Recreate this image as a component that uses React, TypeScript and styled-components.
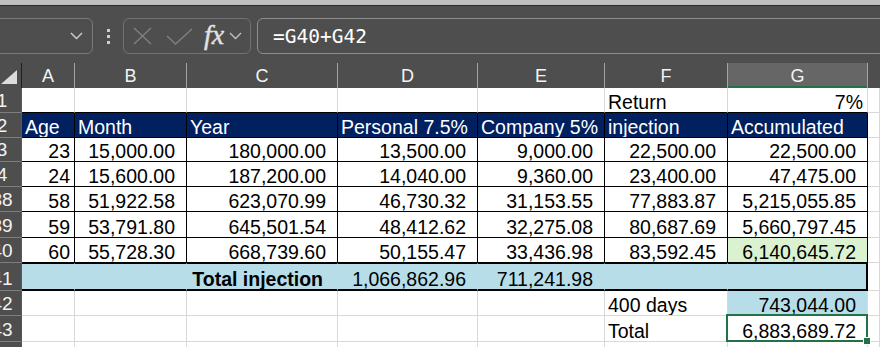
import styled, { createGlobalStyle } from "styled-components";

const GRID = "#d9d9d9";
const BLACK = "#000000";
const NAVY = "#002060";
const TEAL = "#b7dee8";
const MINT = "#daf2d0";
const EXCEL_GREEN = "#217346";
const COLS = "22px 53px 112px 151px 140px 127px 123px 140px 1fr";

type Variant = "blank" | "head" | "teal" | "mint";

type CellSpec = {
  text?: string;
  align?: "left" | "right";
  variant?: Variant;
  pad?: number;
  bold?: boolean;
  right?: string;
  rightW?: number;
  bottom?: string;
  bottomW?: number;
  top?: string;
  selected?: boolean;
};

type RowSpec = { n: string; h: number; cells: CellSpec[]; selected?: boolean };

const blank = (bottom = GRID): CellSpec => ({ bottom });

const dataRow = (n: string, h: number, vals: string[], lastMint = false): RowSpec => ({
  n,
  h,
  cells: [
    ...vals.map((v, i) => ({
      text: v,
      align: "right" as const,
      pad: i === 0 ? 4 : 11,
      right: BLACK,
      bottom: BLACK,
      variant: (lastMint && i === 6 ? "mint" : "blank") as Variant,
    })),
    blank(),
  ],
});

// row 41 is one filled band with a medium frame
const totalCell = (extra: CellSpec = {}): CellSpec => ({
  variant: "teal",
  right: TEAL,
  top: BLACK,
  bottom: BLACK,
  bottomW: 2,
  ...extra,
});

const ROWS: RowSpec[] = [
  {
    n: "1",
    h: 25,
    cells: [
      blank(BLACK),
      blank(BLACK),
      blank(BLACK),
      blank(BLACK),
      blank(BLACK),
      { text: "Return", bottom: BLACK },
      { text: "7%", align: "right", pad: 4, bottom: BLACK },
      blank(),
    ],
  },
  {
    n: "2",
    h: 25,
    cells: [
      ...["Age", "Month", "Year", "Personal 7.5%", "Company 5%", "injection", "Accumulated"].map(
        (t) => ({ text: t, variant: "head" as Variant, right: BLACK, bottom: BLACK })
      ),
      blank(),
    ],
  },
  dataRow("3", 24, ["23", "15,000.00", "180,000.00", "13,500.00", "9,000.00", "22,500.00", "22,500.00"]),
  dataRow("4", 25, ["24", "15,600.00", "187,200.00", "14,040.00", "9,360.00", "23,400.00", "47,475.00"]),
  dataRow("38", 25, ["58", "51,922.58", "623,070.99", "46,730.32", "31,153.55", "77,883.87", "5,215,055.85"]),
  dataRow("39", 26, ["59", "53,791.80", "645,501.54", "48,412.62", "32,275.08", "80,687.69", "5,660,797.45"]),
  dataRow("40", 25, ["60", "55,728.30", "668,739.60", "50,155.47", "33,436.98", "83,592.45", "6,140,645.72"], true),
  {
    n: "41",
    h: 28,
    cells: [
      totalCell(),
      totalCell(),
      totalCell({ text: "Total injection", bold: true, align: "right", pad: 14 }),
      totalCell({ text: "1,066,862.96", align: "right", pad: 11 }),
      totalCell({ text: "711,241.98", align: "right", pad: 11 }),
      totalCell(),
      totalCell({ right: BLACK, rightW: 2 }),
      blank(),
    ],
  },
  {
    n: "42",
    h: 25,
    cells: [
      blank(),
      blank(),
      blank(),
      blank(),
      blank(),
      { text: "400 days" },
      { text: "743,044.00", align: "right", pad: 11, variant: "teal" },
      blank(),
    ],
  },
  {
    n: "43",
    h: 26,
    selected: true,
    cells: [
      blank(),
      blank(),
      blank(),
      blank(),
      blank(),
      { text: "Total" },
      { text: "6,883,689.72", align: "right", pad: 11, selected: true },
      blank(),
    ],
  },
  { n: "44", h: 25, cells: [blank(), blank(), blank(), blank(), blank(), blank(), blank(), blank()] },
];

const GlobalStyle = createGlobalStyle`
  html, body {
    margin: 0;
    padding: 0;
    background: #4e4e4e;
  }
  * {
    box-sizing: border-box;
  }
`;

export default function App() {
  return (
    <>
      <GlobalStyle />
      <Window>
        <TopStrip />
        <FormulaBar>
          <NameBox>
            <svg width="13" height="8" viewBox="0 0 13 8">
              <polyline points="1,1 6.5,6.5 12,1" fill="none" stroke="#cfcfcf" strokeWidth="1.4" />
            </svg>
          </NameBox>
          <Grip>
            <span />
            <span />
            <span />
          </Grip>
          <FnBox>
            <svg width="19" height="18" viewBox="0 0 19 18">
              <line x1="1" y1="1" x2="18" y2="17" stroke="#808080" strokeWidth="1.4" />
              <line x1="18" y1="1" x2="1" y2="17" stroke="#808080" strokeWidth="1.4" />
            </svg>
            <svg width="27" height="17" viewBox="0 0 27 17" style={{ marginLeft: 14 }}>
              <polyline points="1,8 9.5,16 26,1" fill="none" stroke="#808080" strokeWidth="1.4" />
            </svg>
            <FxLabel>fx</FxLabel>
            <svg width="13" height="8" viewBox="0 0 13 8" style={{ marginLeft: 5 }}>
              <polyline points="1,1 6.5,6.5 12,1" fill="none" stroke="#c4c4c4" strokeWidth="1.3" />
            </svg>
          </FnBox>
          <FormulaInput>=G40+G42</FormulaInput>
        </FormulaBar>
        <Sheet>
          <ColHeaderRow>
            <Corner>
              <svg width="18" height="16" viewBox="0 0 18 16">
                <polygon points="1,15 17,15 17,1" fill="#dcdcdc" />
              </svg>
            </Corner>
            {["A", "B", "C", "D", "E", "F", "G"].map((c) => (
              <ColHead key={c} $active={c === "G"}>
                {c}
              </ColHead>
            ))}
            <ColHead />
          </ColHeaderRow>
          {ROWS.map((row) => (
            <SheetRow key={row.n} $h={row.h}>
              <RowHead $selected={row.selected}>
                <RowNum>{row.n}</RowNum>
              </RowHead>
              {row.cells.map((c, i) => (
                <Cell
                  key={i}
                  $variant={c.variant ?? "blank"}
                  $align={c.align ?? "left"}
                  $pad={c.pad ?? 3}
                  $bold={c.bold}
                  $right={c.right ?? GRID}
                  $rightW={c.rightW ?? 1}
                  $bottom={c.bottom ?? GRID}
                  $bottomW={c.bottomW ?? 1}
                  $top={c.top}
                  $selected={c.selected}
                >
                  {c.text}
                  {c.selected && (
                    <>
                      <SelectionFrame />
                      <FillHandle />
                    </>
                  )}
                </Cell>
              ))}
            </SheetRow>
          ))}
        </Sheet>
      </Window>
    </>
  );
}

const Window = styled.div`
  width: 880px;
  height: 347px;
  overflow: hidden;
  background: #4e4e4e;
  font-family: "Liberation Sans", Arial, sans-serif;
`;

const TopStrip = styled.div`
  height: 6px;
  background: #bfbfbf;
  border-bottom: 1px solid #2c2c2c;
`;

const FormulaBar = styled.div`
  height: 57px;
  padding: 12px 0 9px 0;
  display: flex;
  align-items: stretch;
`;

const BarBox = styled.div`
  height: 36px;
  border: 1px solid #7a7a7a;
  border-radius: 6px;
  display: flex;
  align-items: center;
`;

const NameBox = styled(BarBox)`
  width: 103px;
  margin-left: -10px;
  justify-content: flex-end;
  padding-right: 9px;
`;

const Grip = styled.div`
  width: 30px;
  display: flex;
  flex-direction: column;
  align-items: center;
  justify-content: center;
  gap: 3px;

  span {
    display: block;
    width: 3px;
    height: 3px;
    background: #cfcfcf;
  }
`;

const FnBox = styled(BarBox)`
  width: 128px;
  border-color: #727272;
  padding-left: 9px;
`;

const FxLabel = styled.span`
  margin-left: 11px;
  font-family: "Liberation Serif", "DejaVu Serif", serif;
  font-style: italic;
  font-size: 28px;
  line-height: 26px;
  color: #e2e2e2;
  margin-top: -3px;
  -webkit-text-stroke: 0.4px #e2e2e2;
`;

const FormulaInput = styled(BarBox)`
  flex: 1;
  margin-left: 6px;
  margin-right: -12px;
  border-color: #8e8e8e;
  padding-left: 15px;
  font-family: "DejaVu Sans Mono", "Liberation Mono", monospace;
  font-size: 19.5px;
  color: #ffffff;
`;

const Sheet = styled.div`
  background: #ffffff;
`;

const ColHeaderRow = styled.div`
  display: grid;
  grid-template-columns: ${COLS};
  height: 25px;
  background: #4e4e4e;
`;

const Corner = styled.div`
  display: flex;
  align-items: flex-end;
  justify-content: flex-end;
  padding: 0 3px 3px 0;
  border-right: 1px solid #1e1e1e;
`;

const ColHead = styled.div<{ $active?: boolean }>`
  display: flex;
  align-items: center;
  justify-content: center;
  padding-top: 2px;
  color: #f4f4f4;
  font-size: 18px;
  border-right: 1px solid #a3a3a3;
  background: ${({ $active }) => ($active ? "#666666" : "transparent")};
  box-shadow: ${({ $active }) => ($active ? `inset 0 -2px 0 ${EXCEL_GREEN}` : "none")};

  &:last-child {
    border-right: none;
  }
`;

const SheetRow = styled.div<{ $h: number }>`
  display: grid;
  grid-template-columns: ${COLS};
  height: ${({ $h }) => $h}px;
`;

const RowHead = styled.div<{ $selected?: boolean }>`
  overflow: hidden;
  display: flex;
  align-items: flex-end;
  background: #4e4e4e;
  border-bottom: 1px solid #7e7e7e;
  border-right: 1px solid ${({ $selected }) => ($selected ? EXCEL_GREEN : "#5a5a5a")};
`;

const RowNum = styled.span`
  flex: none;
  width: 44px;
  margin-left: -20px;
  text-align: center;
  color: #f2f2f2;
  font-size: 19px;
  line-height: 20px;
  padding-bottom: 1px;
`;

const BG: Record<Variant, string> = {
  blank: "#ffffff",
  head: NAVY,
  teal: TEAL,
  mint: MINT,
};

const Cell = styled.div<{
  $variant: Variant;
  $align: "left" | "right";
  $pad: number;
  $bold?: boolean;
  $right: string;
  $rightW: number;
  $bottom: string;
  $bottomW: number;
  $top?: string;
  $selected?: boolean;
}>`
  position: relative;
  display: flex;
  align-items: flex-end;
  justify-content: ${({ $align }) => ($align === "right" ? "flex-end" : "flex-start")};
  padding: 0 ${({ $pad }) => $pad}px 0 3px;
  overflow: ${({ $selected }) => ($selected ? "visible" : "hidden")};
  white-space: nowrap;
  font-size: 19.5px;
  line-height: 20px;
  font-weight: ${({ $bold }) => ($bold ? 700 : 400)};
  color: ${({ $variant }) => ($variant === "head" ? "#ffffff" : "#000000")};
  background: ${({ $variant }) => BG[$variant]};
  border-right: ${({ $rightW, $right }) => `${$rightW}px solid ${$right}`};
  border-bottom: ${({ $bottomW, $bottom }) => `${$bottomW}px solid ${$bottom}`};
  border-top: ${({ $top }) => ($top ? `1px solid ${$top}` : "none")};
  z-index: ${({ $selected }) => ($selected ? 2 : "auto")};
`;

const SelectionFrame = styled.div`
  position: absolute;
  top: -2px;
  left: -2px;
  right: -1px;
  bottom: -1px;
  border: 2px solid ${EXCEL_GREEN};
  pointer-events: none;
`;

const FillHandle = styled.div`
  position: absolute;
  right: -3px;
  bottom: -3px;
  width: 6px;
  height: 6px;
  background: ${EXCEL_GREEN};
  outline: 1px solid #ffffff;
`;
